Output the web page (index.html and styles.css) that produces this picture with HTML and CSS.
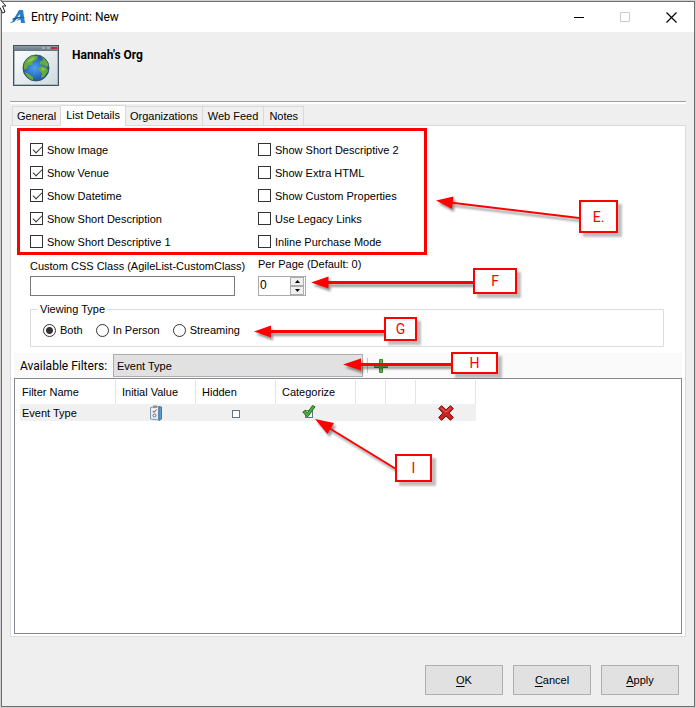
FILE: index.html
```
<!DOCTYPE html>
<html lang="en">
<head>
    <meta charset="utf-8" />
    <meta name="viewport" content="width=device-width, initial-scale=1" />
    <title>Entry Point: New</title>
    <link rel="stylesheet" href="styles.css">
</head>
<body>
    <div class="window">
        <header class="titlebar">
            <svg class="app-logo" viewBox="0 0 16 14">
                <path fill="#2a7fc9" d="M9 0h4l2 13h-4l-.5-3.500L6 11l4-3-.4-4L5 11c-1 1.500-3 2-5 1.500 2-.5 2.500-1.500 3.500-3z"/>
                <path fill="#1b5fa5" d="M2 9c3-2 9-3 13.500-1.500-4 0-8 .8-11 3z"/>
            </svg>
            <span class="title">Entry Point: New</span>
            <button class="window-button" aria-label="Minimize">
                <svg viewBox="0 0 11 11"><path d="M0 5.500h10" stroke="#000"/></svg>
            </button>
            <button class="window-button" aria-label="Maximize" disabled>
                <svg viewBox="0 0 11 11"><path d="M.5.5h9v9h-9z" fill="none" stroke="#ccc"/></svg>
            </button>
            <button class="window-button" aria-label="Close">
                <svg viewBox="0 0 11 11"><path d="M.5.5l10 10M10.500.5l-10 10" stroke="#000" stroke-width="1.200"/></svg>
            </button>
        </header>

        <div class="org">
            <svg class="org-icon" viewBox="0 0 46 41">
                <defs>
                    <linearGradient id="page" x1="0" y1="0" x2="1" y2="1">
                        <stop offset="0" stop-color="#fff"/>
                        <stop offset="1" stop-color="#ccdadd"/>
                    </linearGradient>
                    <linearGradient id="bar" x1="0" y1="0" x2="0" y2="1">
                        <stop offset="0" stop-color="#8b9ba5"/>
                        <stop offset="1" stop-color="#647683"/>
                    </linearGradient>
                    <radialGradient id="sea" cx=".45" cy=".5" r=".6">
                        <stop offset="0" stop-color="#4fa3f0"/>
                        <stop offset="1" stop-color="#12459b"/>
                    </radialGradient>
                </defs>
                <rect x=".5" y=".5" width="45" height="40" fill="url(#page)" stroke="#43535e"/>
                <path d="M1.500 6v33.500h43V6" fill="none" stroke="#a9b9c0"/>
                <rect x="1" y="1" width="44" height="5" fill="url(#bar)"/>
                <path d="M29 3h3M34 3h3" stroke="#c5d0d6" stroke-width="1"/>
                <path d="M38 3h6" stroke="#d8252a" stroke-width="2"/>
                <circle cx="23" cy="23" r="13" fill="url(#sea)" stroke="#33536b"/>
                <path fill="#67ac3b" d="M11 20c1-5 5-9 10-9.500l4 1-1 3-4 2-1 3-4 1-1 3-3 1zM28 12c4 1 7 5 7.500 9l-2 1-3-2-4-1 1-3 3-1zM25 23l4-2 5 2 1 3-4 6-3 1 1-5-3-2zM12 27l4 2 4 3v3c-4-1-7-4-8-8z"/>
                <path fill="#9acb62" d="M14 18c2-3 4-5 8-6l-2 3-4 2zM28 23l4 1-2 2z"/>
            </svg>
            <h1>Hannah's Org</h1>
        </div>

        <nav class="tabs" role="tablist">
            <button class="tab" role="tab">General</button>
            <button class="tab active" role="tab" aria-selected="true">List Details</button>
            <button class="tab" role="tab">Organizations</button>
            <button class="tab" role="tab">Web Feed</button>
            <button class="tab" role="tab">Notes</button>
        </nav>

        <main class="panel">
            <div class="options">
                <div class="option-column">
                    <label><input type="checkbox" checked> Show Image</label>
                    <label><input type="checkbox" checked> Show Venue</label>
                    <label><input type="checkbox" checked> Show Datetime</label>
                    <label><input type="checkbox" checked> Show Short Description</label>
                    <label><input type="checkbox"> Show Short Descriptive 1</label>
                </div>
                <div class="option-column">
                    <label><input type="checkbox"> Show Short Descriptive 2</label>
                    <label><input type="checkbox"> Show Extra HTML</label>
                    <label><input type="checkbox"> Show Custom Properties</label>
                    <label><input type="checkbox"> Use Legacy Links</label>
                    <label><input type="checkbox"> Inline Purchase Mode</label>
                </div>
            </div>

            <div class="fields">
                <div class="field css-class">
                    <label for="css-class">Custom CSS Class (AgileList-CustomClass)</label>
                    <input type="text" id="css-class">
                </div>
                <div class="field per-page">
                    <label for="per-page">Per Page (Default: 0)</label>
                    <div class="spinner">
                        <input type="text" id="per-page" value="0">
                        <div class="spinner-buttons">
                            <button aria-label="Increase"><svg viewBox="0 0 5 3"><path d="M0 3h5L2.500 0z"/></svg></button>
                            <button aria-label="Decrease"><svg viewBox="0 0 5 3"><path d="M0 0h5L2.500 3z"/></svg></button>
                        </div>
                    </div>
                </div>
            </div>

            <fieldset class="viewing">
                <legend>Viewing Type</legend>
                <label><input type="radio" name="viewing" checked> Both</label>
                <label><input type="radio" name="viewing"> In Person</label>
                <label><input type="radio" name="viewing"> Streaming</label>
            </fieldset>

            <div class="toolbar">
                <label for="filters">Available Filters:</label>
                <select id="filters">
                    <option>Event Type</option>
                </select>
                <span class="separator"></span>
                <button class="icon-button" aria-label="Add filter">
                    <svg width="14" height="14" viewBox="0 0 14 14"><path d="M4.500.5h3v5h5v3h-5v5h-3v-5h-5v-3h5z" fill="#5db548" stroke="#3b8a30"/></svg>
                </button>
            </div>

            <div class="list">
                <table>
                    <thead>
                        <tr>
                            <th class="name">Filter Name</th>
                            <th class="value">Initial Value</th>
                            <th class="value">Hidden</th>
                            <th class="value">Categorize</th>
                            <th class="blank"></th>
                            <th class="blank"></th>
                            <th class="remove"></th>
                        </tr>
                    </thead>
                    <tbody>
                        <tr>
                            <td class="name">Event Type</td>
                            <td>
                                <button class="icon-button" aria-label="Edit initial value">
                                    <svg width="12" height="16" viewBox="0 0 12 16">
                                        <path d="M.5 2.500l8-1v13.500l-8-1z" fill="#e9f0f5" stroke="#7d97aa"/>
                                        <path d="M9 1.500l2.500.5v12L9 15.500z" fill="#5b9bd0" stroke="#3f7cab"/>
                                        <path d="M3 .5h4V3H3z" fill="#8a969e"/>
                                        <path d="M3 6l1 1.500L6.500 4.500" fill="none" stroke="#c0392b"/>
                                        <circle cx="4.500" cy="10.500" r="1.500" fill="none" stroke="#6b6f80"/>
                                    </svg>
                                </button>
                            </td>
                            <td><input class="small-check" type="checkbox" aria-label="Hidden"></td>
                            <td>
                                <span class="ticked">
                                    <input class="small-check" type="checkbox" checked aria-label="Categorize">
                                    <svg width="14" height="13" viewBox="0 0 14 13"><path d="M.8 7L3.200 5.500 5.200 8 10.500.6l2.500 1.200L6 11.500H4.800z" fill="#4db033" stroke="#236b1c"/></svg>
                                </span>
                            </td>
                            <td></td>
                            <td></td>
                            <td>
                                <button class="icon-button" aria-label="Remove filter">
                                    <svg width="16" height="16" viewBox="0 0 16 16">
                                        <path d="M3.500.7L8 4.800 12.500.7l2.800 2.800L11.200 8l4.100 4.500-2.800 2.800L8 11.200l-4.500 4.100-2.800-2.800L4.800 8 .7 3.500z" fill="#cf2020" stroke="#6d1416"/>
                                        <path d="M3.500 2.200L8 6.300l4.500-4.100 1 1L9 7.500H7L2.500 3.300z" fill="#e04a48"/>
                                    </svg>
                                </button>
                            </td>
                        </tr>
                    </tbody>
                </table>
            </div>
        </main>

        <footer class="actions">
            <button><u>O</u>K</button>
            <button><u>C</u>ancel</button>
            <button><u>A</u>pply</button>
        </footer>
    </div>

    <!-- Callouts over the dialog -->
    <div class="callouts">
        <svg class="arrows" width="696" height="708" viewBox="0 0 696 708">
            <g fill="#f00" stroke="#f00" stroke-width="3">
                <path d="M579 218L450 202.500" stroke-width="2"/>
                <path d="M473 282.500H326"/>
                <path d="M385 331.500H269"/>
                <path d="M452 364.500H359"/>
                <path d="M396 469L329 428" stroke-width="2"/>
            </g>
            <g fill="#f00">
                <path d="M436 200.500L453.500 196.500 452 209z"/>
                <path d="M311 282.500L328.500 276.500V288.500z"/>
                <path d="M254 331.500L271 325.500V337.500z"/>
                <path d="M343 364.500L361 358.500V370.500z"/>
                <path d="M315 419L334 423 327.500 434z"/>
            </g>
        </svg>
        <svg class="cursor" width="8" height="14" viewBox="0 0 8 14"><path d="M-4-5L6 6H2.500L5 12 2.500 13 0 7.500" fill="#fff" stroke="#222"/></svg>
        <div class="highlight"></div>
        <div class="callout e">E.</div>
        <div class="callout f">F</div>
        <div class="callout g">G</div>
        <div class="callout h">H</div>
        <div class="callout i">I</div>
    </div>
</body>
</html>
```
FILE: styles.css
```
* {
    box-sizing: border-box;
}

body {
    margin: 0;
    padding: 1px;
    height: 100vh;
    position: relative;
    background: #d0d0d0;
    font-family: "Liberation Sans", Arial, sans-serif;
    font-size: 11px;
    line-height: 14px;
    color: #000;
}

button,
input,
select {
    font: inherit;
    color: inherit;
    margin: 0;
    padding: 0;
}

.window {
    display: flex;
    flex-direction: column;
    height: 100%;
    border: 1px solid #6e6e6e;
    background: #efefef;
}

/* Title bar */
.titlebar {
    display: flex;
    align-items: center;
    height: 30px;
    padding-left: 8px;
    background: #fff;
}

.app-logo {
    width: 16px;
    height: 14px;
}

.title {
    flex: 1;
    padding-left: 5px;
    font-family: Roboto, sans-serif;
    font-size: 12px;
}

.window-button {
    display: flex;
    align-items: center;
    justify-content: center;
    width: 46px;
    height: 30px;
    border: 0;
    background: none;
}

.window-button svg {
    width: 11px;
    height: 11px;
}

/* Organization */
.org {
    display: flex;
    gap: 13px;
    height: 72px;
    margin: 0 8px;
    padding: 13px 3px 0;
    border-bottom: 2px solid #fff;
    box-shadow: inset 0 -1px #a0a0a0;
}

.org-icon {
    width: 46px;
    height: 41px;
}

h1 {
    margin: 3px 0 0;
    font-family: Roboto, sans-serif;
    font-size: 12px;
    line-height: 14px;
    font-weight: 700;
}

/* Tabs */
.tabs {
    display: flex;
    align-items: flex-end;
    height: 21px;
    padding-left: 10px;
    position: relative;
}

.tab {
    height: 19px;
    padding: 0 4px;
    border: 1px solid #d9d9d9;
    border-width: 1px 1px 0 0;
    background: #f0f0f0;
}

.tab:first-child {
    border-left-width: 1px;
}

.tab:nth-child(4) {
    padding: 0 5px;
}

.tab:last-child {
    padding: 0 5px;
}

.tab.active {
    height: 21px;
    margin-bottom: -1px;
    padding: 0 5px 3px;
    background: #fff;
}

.panel {
    flex: 1;
    display: flex;
    flex-direction: column;
    margin: 0 8px;
    padding: 12px 3px 2px;
    border: 1px solid #dcdcdc;
    background: #fff;
}

/* Options */
.options {
    display: flex;
    padding-left: 16px;
}

.option-column {
    width: 228px;
}

.option-column label {
    display: flex;
    align-items: center;
    gap: 4px;
    height: 23px;
}

input[type="checkbox"],
input[type="radio"] {
    appearance: none;
    flex: none;
    width: 13px;
    height: 13px;
    border: 1px solid #333;
    background: #fff;
}

input[type="checkbox"]:checked {
    position: relative;
}

input[type="checkbox"]:checked::after {
    content: "";
    position: absolute;
    left: 4px;
    top: 0;
    width: 4px;
    height: 8px;
    border: solid #333;
    border-width: 0 1px 1px 0;
    transform: rotate(45deg);
}

input[type="radio"] {
    border-radius: 50%;
}

input[type="radio"]:checked {
    background: radial-gradient(circle, #333 3px, #fff 4px);
}

/* Text fields */
.fields {
    display: flex;
    gap: 8px;
    padding: 4px 0 0 16px;
}

.css-class {
    width: 220px;
}

.field label {
    display: block;
    height: 19px;
    padding-top: 2px;
    white-space: nowrap;
}

.per-page label {
    padding-top: 0;
}

.css-class input {
    display: block;
    width: 205px;
    height: 20px;
    padding: 0 3px;
    border: 1px solid #7a7a7a;
}

.spinner {
    display: flex;
    width: 48px;
    height: 20px;
    border: 1px solid #ababab;
}

.spinner input {
    width: 31px;
    padding: 0 1px 2px;
    border: 0;
    font-size: 12px;
}

.spinner-buttons {
    display: flex;
    flex-direction: column;
    width: 14px;
}

.spinner-buttons button {
    display: flex;
    align-items: center;
    justify-content: center;
    height: 9px;
    border: 1px solid #adadad;
    background: #f0f0f0;
}

.spinner-buttons svg {
    width: 5px;
    height: 3px;
}

/* Viewing type */
.viewing {
    display: flex;
    gap: 13px;
    height: 45px;
    margin: 6px 18px 0 16px;
    padding: 7px 12px 0;
    border: 1px solid #dcdcdc;
}

.viewing legend {
    margin-left: -5px;
    padding: 0 2px;
}

.viewing label {
    display: flex;
    align-items: center;
    gap: 4px;
    height: 14px;
}

/* Filters */
.toolbar {
    display: flex;
    align-items: center;
    height: 25px;
    margin-top: 6px;
    padding-left: 6px;
    background: #fafafa;
}

.toolbar label {
    width: 93px;
    font-family: Roboto, sans-serif;
    font-size: 12px;
    white-space: nowrap;
}

.toolbar select {
    appearance: none;
    width: 250px;
    height: 23px;
    padding: 0 3px;
    border: 1px solid #adadad;
    border-radius: 0;
    background: #e1e1e1;
}

.separator {
    height: 15px;
    margin: 0 7px 0 4px;
    border-left: 1px solid #c5c5c5;
}

.icon-button {
    display: inline-block;
    border: 0;
    background: none;
    vertical-align: top;
}

.icon-button svg {
    display: block;
    overflow: visible;
}

.list {
    flex: 1;
    padding: 1px 5px;
    border: 1px solid #828790;
    background: #fff;
}

table {
    table-layout: fixed;
    width: 456px;
    border-spacing: 0;
}

th {
    height: 24px;
    padding: 0 6px;
    border-right: 1px solid #e5e5e5;
    font-weight: 400;
    text-align: left;
    white-space: nowrap;
}

td {
    height: 17px;
    padding: 0;
    background: #f0f0f0;
    text-align: center;
}

th.name,
td.name {
    width: 96px;
    padding: 0 2px;
    text-align: left;
}

.value {
    width: 80px;
}

.blank {
    width: 30px;
}

.remove {
    width: 60px;
}

input.small-check {
    display: inline-block;
    width: 8px;
    height: 8px;
    border-color: #5f7584;
    vertical-align: middle;
}

input.small-check:checked::after {
    content: none;
}

.ticked {
    position: relative;
    margin-right: 14px;
}

.ticked svg {
    position: absolute;
    left: -3px;
    top: -2px;
}

/* Buttons */
.actions {
    display: flex;
    justify-content: flex-end;
    gap: 10px;
    padding: 28px 15px 11px;
}

.actions button {
    width: 78px;
    height: 30px;
    border: 1px solid #adadad;
    background: #e1e1e1;
}

.actions u {
    text-underline-offset: 2px;
}

/* Callouts */
.callouts {
    position: absolute;
    left: 0;
    top: 0;
    pointer-events: none;
}

.arrows {
    position: absolute;
    left: 0;
    top: 0;
    filter: drop-shadow(2px 3px 1px rgba(0, 0, 0, 0.4));
}

.cursor {
    position: absolute;
    left: 0;
    top: 0;
}

.highlight {
    position: absolute;
    left: 17px;
    top: 128px;
    width: 410px;
    height: 127px;
    border: 3px solid #f00;
}

.callout {
    position: absolute;
    display: flex;
    align-items: center;
    justify-content: center;
    border: 2px solid #f00;
    background: #fff;
    box-shadow: 4px 4px 2px rgba(0, 0, 0, 0.25);
    color: #f00;
    font-family: Roboto, "Liberation Sans", sans-serif;
    font-size: 14px;
    font-weight: 400;
}

.e {
    left: 579px;
    top: 200px;
    width: 39px;
    height: 33px;
}

.f {
    left: 473px;
    top: 268px;
    width: 44px;
    height: 26px;
}

.g {
    left: 384px;
    top: 317px;
    width: 33px;
    height: 24px;
}

.h {
    left: 451px;
    top: 352px;
    width: 47px;
    height: 22px;
}

.i {
    left: 395px;
    top: 454px;
    width: 37px;
    height: 28px;
}
```
